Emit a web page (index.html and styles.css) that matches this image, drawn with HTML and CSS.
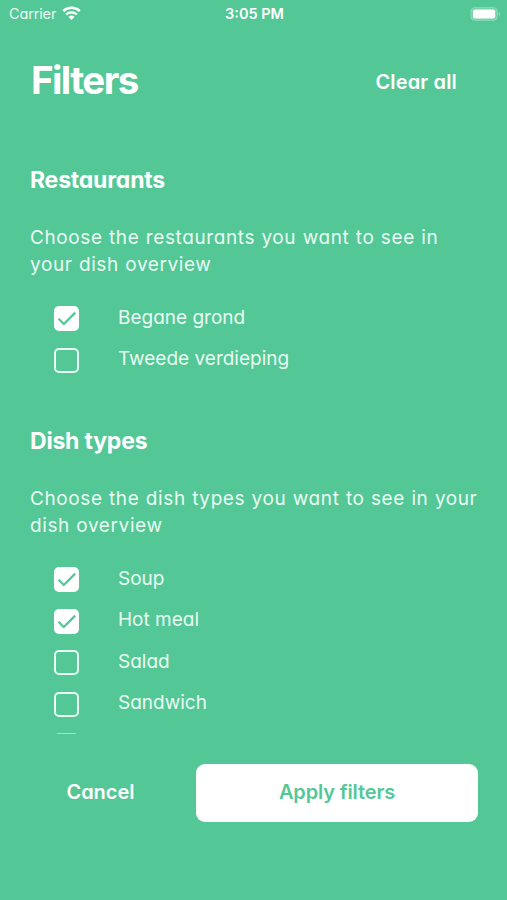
FILE: index.html
```
<!DOCTYPE html>
<html lang="en">
<head>
    <meta charset="UTF-8">
    <meta name="viewport" content="width=device-width, initial-scale=1.0">
    <title>Filters</title>
    <link rel="stylesheet" href="styles.css">
</head>
<body>
<div class="screen">
    <div class="status-bar">
        <div class="carrier">
            <span class="carrier-name">Carrier</span>
            <svg class="wifi" width="19" height="15" viewBox="0 0 19 15">
                <path d="M1.2 5.1a12 12 0 0 1 16.6 0" fill="none" stroke="#fff" stroke-width="2.6"/>
                <path d="M4.2 8.5a7.7 7.7 0 0 1 10.6 0" fill="none" stroke="#fff" stroke-width="2.4"/>
                <path d="M9.5 14l-3-3a4.4 4.4 0 0 1 6 0z" fill="#fff"/>
            </svg>
        </div>
        <span class="time">3:05 PM</span>
        <svg class="battery" width="32" height="14" viewBox="0 0 32 14">
            <rect x="0.8" y="0.6" width="26.6" height="12.8" rx="4" fill="#fff" fill-opacity="0.2" stroke="#fff" stroke-opacity="0.25"/>
            <rect x="3" y="2.6" width="22.2" height="8.8" rx="2" fill="#fff"/>
            <path d="M28.8 5v4c1.6-.6 1.6-3.4 0-4z" fill="#fff" fill-opacity="0.45"/>
        </svg>
    </div>

    <div class="header">
        <h1>Filters</h1>
        <button class="clear">Clear all</button>
    </div>

    <div class="content">
        <div class="section">
            <h2>Restaurants</h2>
            <p>Choose the restaurants you want to see in<br>your dish overview</p>
            <label class="option"><input type="checkbox" checked><span class="box"><svg width="25" height="25" viewBox="0 0 25 25"><path d="M4.5 12.8l5.3 5.2L21.2 6.6"/></svg></span><span class="name">Begane grond</span></label>
            <label class="option"><input type="checkbox"><span class="box"></span><span class="name">Tweede verdieping</span></label>
        </div>

        <div class="section">
            <h2>Dish types</h2>
            <p>Choose the dish types you want to see in your<br>dish overview</p>
            <label class="option"><input type="checkbox" checked><span class="box"><svg width="25" height="25" viewBox="0 0 25 25"><path d="M4.5 12.8l5.3 5.2L21.2 6.6"/></svg></span><span class="name">Soup</span></label>
            <label class="option"><input type="checkbox" checked><span class="box"><svg width="25" height="25" viewBox="0 0 25 25"><path d="M4.5 12.8l5.3 5.2L21.2 6.6"/></svg></span><span class="name">Hot meal</span></label>
            <label class="option"><input type="checkbox"><span class="box"></span><span class="name">Salad</span></label>
            <label class="option"><input type="checkbox"><span class="box"></span><span class="name">Sandwich</span></label>
            <label class="option"><input type="checkbox"><span class="box"></span></label>
        </div>
    </div>

    <div class="footer">
        <button class="cancel">Cancel</button>
        <button class="apply">Apply filters</button>
    </div>
</div>
</body>
</html>
```

FILE: styles.css
```
* { box-sizing: border-box; }
body {
    margin: 0;
    background: #53c796;
    color: #fff;
    font-family: Inter, "Open Sans", sans-serif;
    font-feature-settings: "cv11"; /* single-storey a */
}
h1, h2, p { margin: 0; }
button {
    border: 0;
    padding: 0;
    background: none;
    color: #fff;
    font: inherit;
    font-feature-settings: inherit;
    font-size: 20px;
    font-weight: 600;
    white-space: nowrap;
}
.screen {
    width: 507px;
    height: 900px;
    display: flex;
    flex-direction: column;
    overflow: hidden;
}

.status-bar {
    height: 27px;
    padding: 0 5px 0 9px;
    display: grid;
    grid-template-columns: 1fr auto 1fr;
    align-items: center;
    font-size: 14.5px;
}
.carrier { display: flex; align-items: center; gap: 6px; }
.carrier-name { letter-spacing: -0.15px; opacity: 0.9; }
.time { font-weight: 600; margin-right: 2px; }
.battery { justify-self: end; }

.header {
    height: 138px;
    padding: 28px 50px 0 31px;
    display: flex;
    justify-content: space-between;
    align-items: flex-start;
}
h1 { font-size: 38.5px; line-height: 50px; font-weight: 700; letter-spacing: -1.6px; }
.clear { line-height: 54px; letter-spacing: 0.15px; }

.content { height: 569px; padding: 0 20px 0 30px; overflow: hidden; }
.section { margin-bottom: 45px; }
h2 { font-size: 23px; line-height: 30px; font-weight: 700; letter-spacing: -0.2px; margin-bottom: 29px; }
p {
    font-size: 19px;
    line-height: 27px;
    letter-spacing: 0.6px;
    word-spacing: 0.5px;
    white-space: nowrap;
    margin-bottom: 20px;
    color: #e9fbf2;
}
.option {
    height: 41.5px;
    padding-left: 24px;
    display: flex;
    align-items: center;
    gap: 39px;
    font-size: 19px;
    line-height: 24px;
    color: #e9fbf2;
}
.option input { display: none; }
.name { padding-bottom: 2px; }
.box {
    width: 25px;
    height: 25px;
    border: 2px solid #e9fbf2;
    border-radius: 5px;
}
.option input:checked + .box { background: #fff; border: 0; }
.option:last-child .box { border-color: #a5e2c8; }
.section:first-child .option:last-child .box { border-color: #e9fbf2; }
.box svg { display: block; }
.box path { fill: none; stroke: #53c796; stroke-width: 2.2; }

.footer {
    padding: 30px 29px 0 30px;
    display: flex;
    justify-content: space-between;
}
.footer button { height: 58px; padding-bottom: 3px; }
.cancel { width: 141px; }
.apply {
    width: 282px;
    border-radius: 9px;
    background: #fff;
    color: #53c796;
    letter-spacing: -0.15px;
}
```
